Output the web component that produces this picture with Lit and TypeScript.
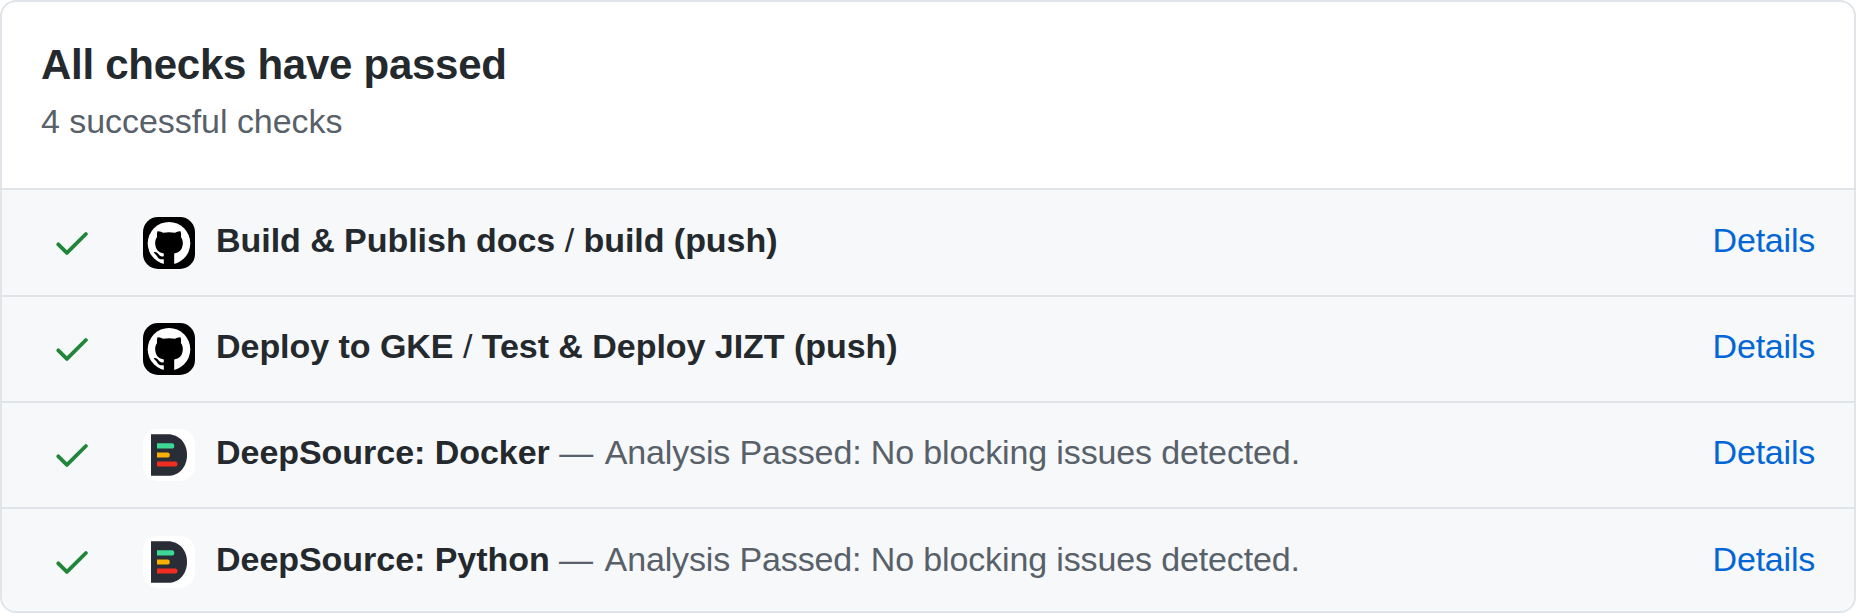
import { LitElement, html, css, svg } from "lit";
import { customElement, property } from "lit/decorators.js";

type Check = { app: "github" | "deepsource"; name: string[]; note?: string };

const checks: Check[] = [
  { app: "github", name: ["Build & Publish docs", "build (push)"] },
  { app: "github", name: ["Deploy to GKE", "Test & Deploy JIZT (push)"] },
  { app: "deepsource", name: ["DeepSource: Docker"], note: "Analysis Passed: No blocking issues detected." },
  { app: "deepsource", name: ["DeepSource: Python"], note: "Analysis Passed: No blocking issues detected." },
];

const githubLogo = svg`
  <rect width="52" height="52" fill="#000" />
  <circle cx="26" cy="26.300" r="21.300" fill="#fff" />
  <path fill="#000" d="M14.500 14.200C17 14 18.700 15 20 15.800C24 15 28 15 32 15.800C33.500 15 35.200 14 37.500 14.200C38.200 16.200 38.200 18 37.900 20C39.400 22 40 24 39.800 27C39.300 33 36 35.500 31.200 36.500V49H20.800V42.200C17 42.800 15.200 41.500 14 39.200C13 37.500 11.500 36.700 10.700 35.200C13 34.700 14.800 36 16 37.800C17.300 39.700 19 39.700 20.800 39.200V36.500C16 35.500 12.700 33 12.200 27C12 24 12.600 22 14.100 20C13.800 18 13.800 16.200 14.500 14.200Z" />`;

const deepsourceLogo = svg`
  <rect width="52" height="52" fill="#fff" />
  <path fill="#282d36" d="M8 5.300H25C36 5.300 44 14 44 26C44 38 36 46.800 25 46.800H8Z" />
  <path fill="#3dd895" d="M14 14.300H29.500Q31.300 14.300 31.300 16.900T29.500 19.500H14Z" />
  <path fill="#fbb103" d="M14 23.400H25Q26.800 23.400 26.800 26T25 28.600H14Z" />
  <path fill="#f22c20" d="M14 32.400H32.700Q34.500 32.400 34.500 35T32.700 37.600H14Z" />`;

@customElement("check-row")
class CheckRow extends LitElement {
  @property({ attribute: false }) check!: Check;

  static styles = css`
    :host {
      display: flex;
      align-items: flex-start;
      box-sizing: border-box;
      padding: var(--row-top, 27px) 39px 0 54px;
      border-top: 2px solid #e1e4e8;
      background: #f6f8fa;
    }
    .tick { flex: none; width: 36px; height: 30px; margin-top: 13px; }
    .logo { flex: none; width: 52px; height: 52px; margin-left: 51px; border-radius: 15px; }
    .label { flex: 1; margin-left: 21px; line-height: 46px; white-space: pre; color: #586069; }
    .name { font-weight: 700; color: #24292e; letter-spacing: -0.04px; }
    .slash { font-weight: 400; }
    .dash { margin-right: 2px; }
    .note { letter-spacing: -0.13px; }
    .details { line-height: 46px; letter-spacing: -0.22px; color: #0366d6; text-decoration: none; }
  `;

  render() {
    const { app, name, note } = this.check;
    return html`
      <svg class="tick" viewBox="0 0 36 30"><path d="M4 14.300L12.600 22.900L31.600 4" fill="none" stroke="#22863a" stroke-width="3.800" stroke-linecap="round" stroke-linejoin="round" transform="translate(-1.700 0)" /></svg>
      <svg class="logo" viewBox="0 0 52 52">${app === "github" ? githubLogo : deepsourceLogo}</svg>
      <span class="label"><span class="name">${name.map((part, i) => (i ? html`<span class="slash"> / </span>${part}` : part))}</span>${note
        ? html`<span class="dash"> — </span><span class="note">${note}</span>`
        : null}</span>
      <a class="details" href="#">Details</a>
    `;
  }
}

@customElement("app-root")
class AppRoot extends LitElement {
  static styles = css`
    :host {
      display: block;
      height: 613px;
      background: #fff;
      font: 34px "Liberation Sans", Arial, sans-serif;
    }
    .card {
      box-sizing: border-box;
      height: 613px;
      display: grid;
      grid-template-rows: 186px 107px 106px 106px 1fr;
      border: 2px solid #e1e4e8;
      border-radius: 16px;
      overflow: hidden;
    }
    .head { padding: 36px 39px 0; }
    .title { margin: 0; font-size: 42px; line-height: 54px; font-weight: 700; letter-spacing: -0.27px; color: #24292e; }
    .sub { margin: 5px 0 0; line-height: 48px; letter-spacing: -0.05px; color: #586069; }
    .inner { --row-top: 26px; }
  `;

  render() {
    return html`
      <section class="card">
        <header class="head">
          <h3 class="title">All checks have passed</h3>
          <p class="sub">4 successful checks</p>
        </header>
        ${checks.map((check, i) => html`<check-row class=${i === 1 || i === 2 ? "inner" : "outer"} .check=${check}></check-row>`)}
      </section>
    `;
  }
}
